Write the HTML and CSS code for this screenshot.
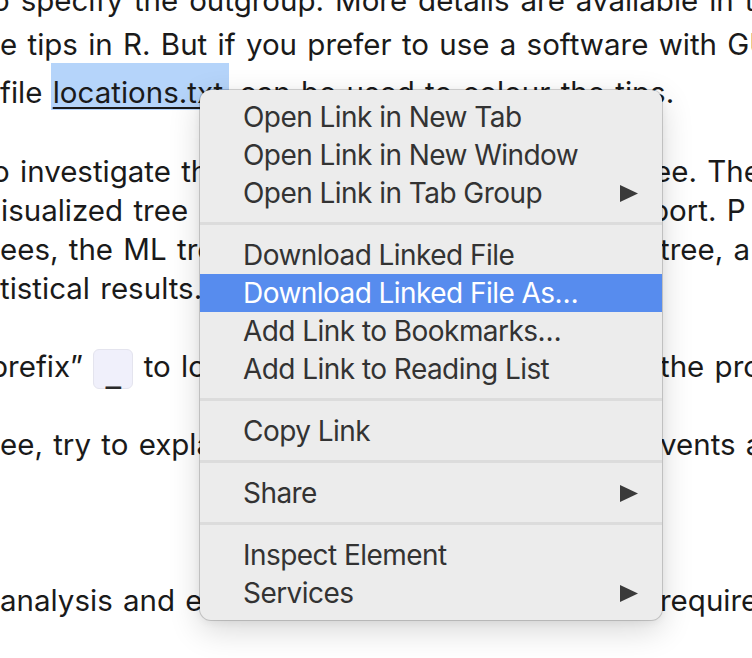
FILE: index.html
```html
<!DOCTYPE html>
<html lang="en">
<head>
<meta charset="utf-8">
<title>Context menu</title>
<link rel="stylesheet" href="styles.css">
</head>
<body>
<main class="article">
  <p class="para para-first">
    <span class="line line-top shift-half justify w-line1">o specify the outgroup. More details are available in the</span>
    <span class="line justify w-line2">e tips in R. But if you prefer to use a software with GUI,</span>
    <span class="line">file <a class="link" href="#">locations.txt</a> can be used to colour the tips.</span>
  </p>
  <p class="para para-second">
    <span class="line split"><span class="left shift-half">o investigate th</span><span class="right cut">ee. The</span></span>
    <span class="line split"><span class="left shift-i">isualized tree</span><span class="right cut-more">port. P</span></span>
    <span class="line split"><span class="left">ees, the ML tre</span><span class="right">tree, a</span></span>
    <span class="line">tistical results.</span>
  </p>
  <p class="para">
    <span class="line split"><span class="left shift-p">prefix” <code class="code">_</code> to lo</span><span class="right">the pro</span></span>
  </p>
  <p class="para">
    <span class="line split"><span class="left">ee, try to expla</span><span class="right">vents a</span></span>
  </p>
  <p class="para para-last">
    <span class="line split"><span class="left">analysis and e</span><span class="right">require</span></span>
  </p>
</main>

<div class="menu" role="menu">
  <div class="item">Open Link in New Tab</div>
  <div class="item">Open Link in New Window</div>
  <div class="item">Open Link in Tab Group<svg class="arrow" viewBox="0 0 18 17" width="18" height="17"><polygon points="0,0 18,8.5 0,17"/></svg></div>
  <div class="sep"></div>
  <div class="item">Download Linked File</div>
  <div class="item active">Download Linked File As…</div>
  <div class="item">Add Link to Bookmarks…</div>
  <div class="item">Add Link to Reading List</div>
  <div class="sep"></div>
  <div class="item">Copy Link</div>
  <div class="sep"></div>
  <div class="item">Share<svg class="arrow" viewBox="0 0 18 17" width="18" height="17"><polygon points="0,0 18,8.5 0,17"/></svg></div>
  <div class="sep"></div>
  <div class="item">Inspect Element</div>
  <div class="item">Services<svg class="arrow" viewBox="0 0 18 17" width="18" height="17"><polygon points="0,0 18,8.5 0,17"/></svg></div>
</div>
</body>
</html>
```

FILE: styles.css
```css
html, body {
  margin: 0;
  padding: 0;
  background: #ffffff;
  overflow: hidden;
  width: 752px;
  height: 658px;
}

body {
  font-family: Inter, "Noto Sans", "Liberation Sans", sans-serif;
  color: #1a1a1a;
}

.article {
  font-size: 29.5px;
  line-height: 39px;
  letter-spacing: 0;
  word-spacing: 2px;
}

.para {
  margin: 39px 0 0 0;
}

.para-first {
  margin-top: -24px;
  line-height: 48px;
}

.para-first .line {
  height: 48px;
}

.para-first .line-top {
  height: 44px;
}

.para-second {
  margin-top: 36px;
}

.para-last {
  margin-top: 117px;
}

.line {
  display: block;
  white-space: nowrap;
  height: 39px;
}

.justify {
  text-align: justify;
  text-align-last: justify;
}

.w-line1 {
  width: 797px;
}

.w-line2 {
  width: 782px;
}

.split {
  display: grid;
  grid-template-columns: 660px max-content;
}

.right.cut {
  margin-left: -6px;
}

.right.cut-more {
  margin-left: -9px;
}

.shift-half {
  margin-left: -8px;
}

.shift-i {
  margin-left: 1px;
}

.shift-p {
  margin-left: -10px;
}

.link {
  color: #1a1a1a;
  text-decoration: underline;
  text-decoration-thickness: 2px;
  text-underline-offset: 4px;
  background: #b5d4fa;
  padding: 11px 6px 0 2px;
  margin-left: -2px;
}

.code {
  display: inline-block;
  box-sizing: border-box;
  width: 40px;
  height: 40px;
  margin: 0;
  border: 1.5px solid #e4e4ee;
  border-radius: 6px;
  background: #f0f0fb;
  font-family: "DejaVu Sans Mono", monospace;
  font-size: 26px;
  font-weight: bold;
  line-height: 48px;
  text-align: center;
  color: #2a2a2a;
  vertical-align: -6px;
  word-spacing: 0;
}

/* context menu */
.menu {
  position: absolute;
  left: 200px;
  top: 90px;
  width: 462px;
  box-sizing: border-box;
  padding: 8px 0;
  background: #ececec;
  border-radius: 11px;
  box-shadow: 0 0 0 1px rgba(0, 0, 0, 0.16),
              0 10px 32px rgba(0, 0, 0, 0.16),
              0 2px 8px rgba(0, 0, 0, 0.06);
  font-size: 28px;
  letter-spacing: -0.55px;
  color: #333333;
  overflow: hidden;
}

.item {
  height: 38px;
  display: flex;
  align-items: center;
  justify-content: space-between;
  padding: 0 24px 0 43px;
  white-space: nowrap;
}

.item.active {
  background: #578cee;
  color: #ffffff;
}

.arrow {
  fill: #3a3a3a;
  flex: none;
}

.sep {
  height: 3px;
  margin: 10px 0 11px;
  background: #dcdcdc;
}
```
